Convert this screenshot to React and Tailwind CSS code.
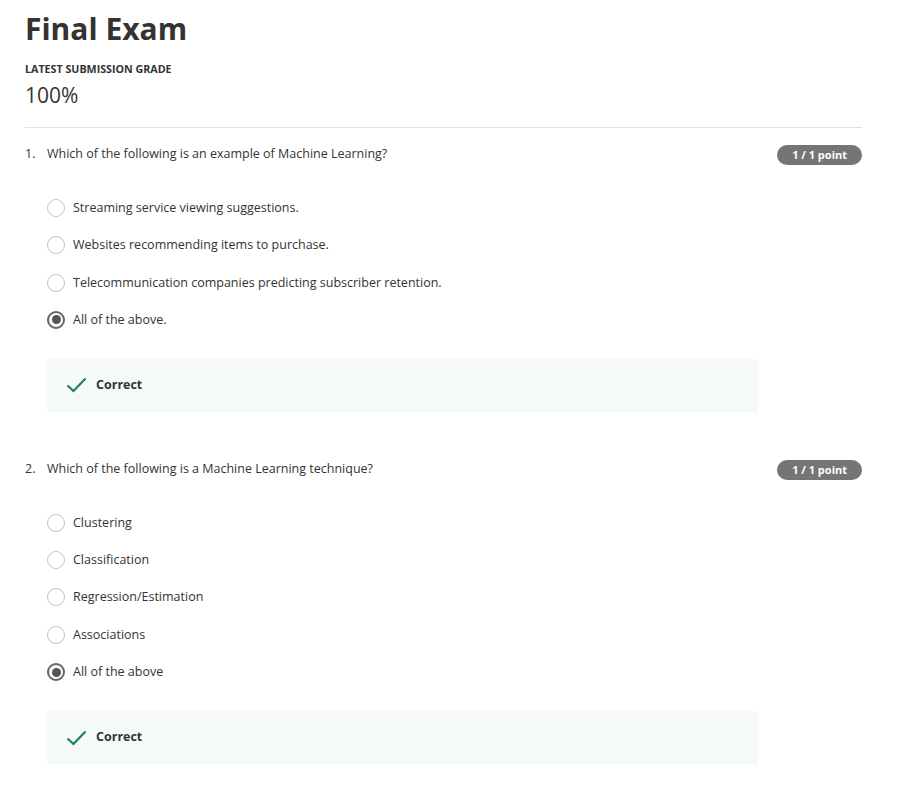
import React from 'react';

const questions = [
  {
    n: 1,
    text: 'Which of the following is an example of Machine Learning?',
    options: [
      'Streaming service viewing suggestions.',
      'Websites recommending items to purchase.',
      'Telecommunication companies predicting subscriber retention.',
      'All of the above.',
    ],
    selected: 3,
  },
  {
    n: 2,
    text: 'Which of the following is a Machine Learning technique?',
    options: ['Clustering', 'Classification', 'Regression/Estimation', 'Associations', 'All of the above'],
    selected: 4,
  },
];

const Radio = ({ checked }) =>
  checked ? (
    <span className="flex h-[18px] w-[18px] shrink-0 items-center justify-center rounded-full border-2 border-[#666]">
      <span className="h-[9px] w-[9px] rounded-full bg-[#555]" />
    </span>
  ) : (
    <span className="h-[18px] w-[18px] shrink-0 rounded-full border-[1.5px] border-[#c4c4c4]" />
  );

const Question = ({ q }) => (
  <div className="pt-[16px]">
    <div className="flex items-start justify-between">
      <div className="flex text-[12.5px] leading-[20px] text-[#333]">
        <span className="w-[22px]">{q.n}.</span>
        <span>{q.text}</span>
      </div>
      <span className="mt-[1px] rounded-full bg-[#757575] px-[15px] text-[11px] font-bold leading-[20px] text-white">
        1 / 1 point
      </span>
    </div>
    <div className="ml-[22px] mt-[33px] flex flex-col gap-[17.3px]">
      {q.options.map((opt, i) => (
        <label key={i} className="flex items-center gap-[8px] text-[12.5px] leading-[20px] text-[#333]">
          <Radio checked={i === q.selected} />
          <span>{opt}</span>
        </label>
      ))}
    </div>
    <div className="ml-[22px] mt-[29px] flex h-[53px] w-[711px] items-center gap-[9px] bg-[#f5f9f8] pl-[19px]">
      <svg width="21" height="16" viewBox="0 0 21 16" fill="none">
        <path d="M1.5 8.5 L7.5 14 L19.5 1.5" stroke="#1f8354" strokeWidth="2.2" />
      </svg>
      <span className="text-[12.5px] font-bold text-[#333]">Correct</span>
    </div>
  </div>
);

export default function App() {
  return (
    <div className="min-h-screen bg-white font-['Open_Sans',sans-serif]">
      <div className="w-[837px] pl-[25px] pt-[9px]" style={{ boxSizing: 'content-box' }}>
        <h1 className="text-[30px] font-bold leading-[40px] text-[#333]">Final Exam</h1>
        <div className="mt-[12px] text-[10.7px] font-bold uppercase leading-[16px] text-[#333]">
          Latest submission grade
        </div>
        <div className="mt-[4px] text-[21px] leading-[28px] text-[#333]">100%</div>
        <div className="mt-[18px] border-t border-[#e1e1e1]" />
        {questions.map((q) => (
          <div key={q.n} className={q.n === 2 ? 'mt-[31px]' : ''}>
            <Question q={q} />
          </div>
        ))}
      </div>
    </div>
  );
}
